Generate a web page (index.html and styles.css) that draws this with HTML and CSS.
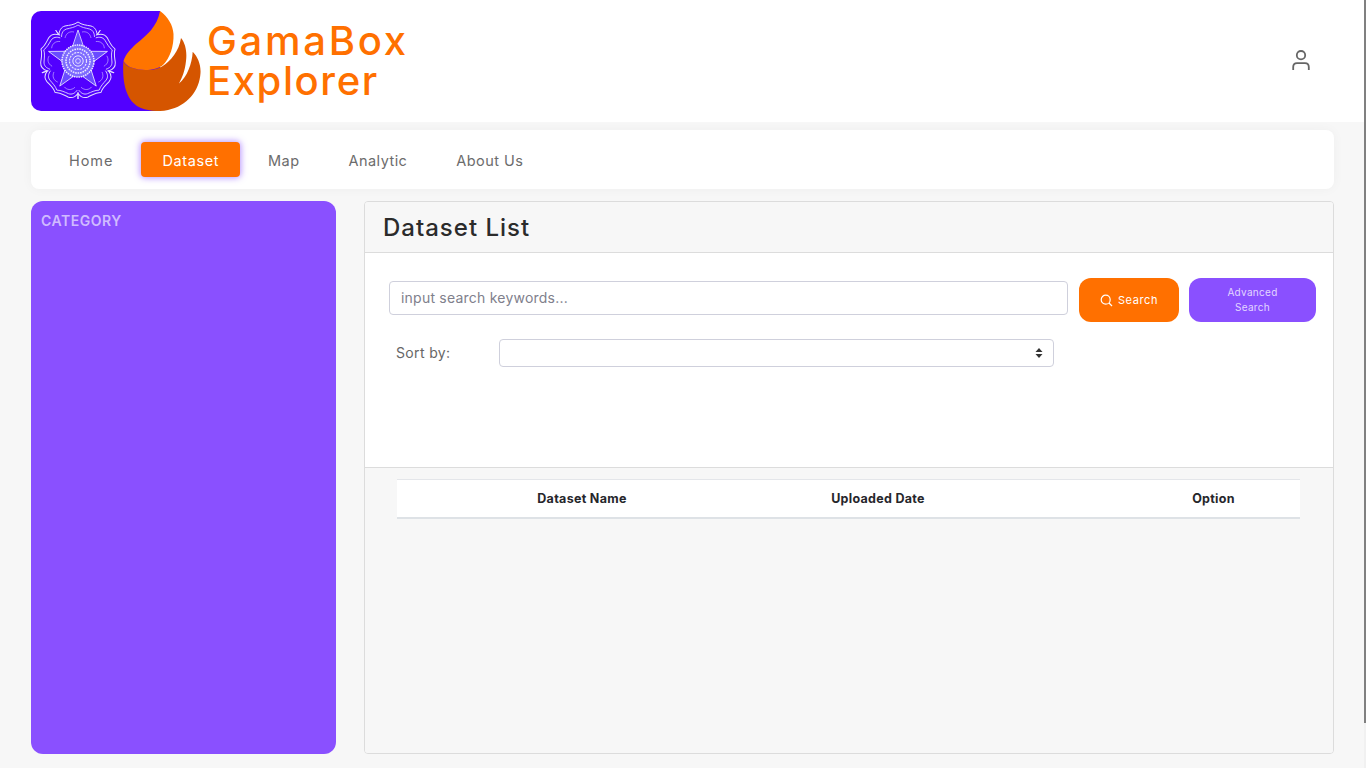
FILE: index.html
```html
<!DOCTYPE html>
<html lang="en">
<head>
<meta charset="utf-8">
<title>GamaBox Explorer</title>
<link rel="stylesheet" href="styles.css">
</head>
<body>
<div class="scrollbar"><div class="scrollbar-thumb"></div></div>
<header class="topbar">
  <a class="brand">
    <svg class="logo" width="170" height="100" viewBox="0 0 170 100" aria-hidden="true">
      <defs>
        <g id="halfpetal" fill="none" stroke="#e4e0ff">
          <path stroke-width="1" d="M0,-39 C4,-36 8,-36 13,-35 C17,-34 19,-30 19,-26 L22.300,-30.700"/>
          <path stroke-width="0.8" d="M0,-36 C3.500,-33.500 7.500,-33 11.500,-32 C15,-31 16.500,-28 16.500,-24"/>
          <path stroke-width="0.5" d="M4,-29 C8,-30 12,-28 13,-23"/>
        </g>
        <g id="petal">
          <use href="#halfpetal"/>
          <use href="#halfpetal" transform="scale(-1,1)"/>
        </g>
        <path id="tip" d="M0,-31 L6,-13 L-6,-13 Z" fill="#6a4cff" stroke="#e6e2ff" stroke-width="0.8"/>
      </defs>
      <path fill="#5200ff" d="M10,0H129V100H10A10,10 0 0 1 0,90V10A10,10 0 0 1 10,0Z"/>
      <g transform="translate(47,50)">
        <use href="#petal"/>
        <use href="#petal" transform="rotate(72)"/>
        <use href="#petal" transform="rotate(144)"/>
        <use href="#petal" transform="rotate(216)"/>
        <use href="#petal" transform="rotate(288)"/>
        <use href="#tip"/>
        <use href="#tip" transform="rotate(72)"/>
        <use href="#tip" transform="rotate(144)"/>
        <use href="#tip" transform="rotate(216)"/>
        <use href="#tip" transform="rotate(288)"/>
        <circle r="16" fill="#7e6bff" stroke="#f0eeff" stroke-width="1.500" stroke-dasharray="1.500 0.800"/>
        <circle r="12" fill="none" stroke="#f0eeff" stroke-width="1.500" stroke-dasharray="1.600 0.900"/>
        <circle r="8.500" fill="none" stroke="#e8e4ff" stroke-width="1.200" stroke-dasharray="2 1"/>
        <circle r="5.200" fill="none" stroke="#e8e4ff" stroke-width="1"/>
        <circle r="2.400" fill="none" stroke="#f0eeff" stroke-width="0.800"/>
      </g>
      <path fill="#d55500" d="M92.500,50C94,54 98,56 102,57C110,60 124,60 131,55.500C140,50 148,40 150,27C155,33 156,42 155,50C154,60 151,67 148,72.500C156,66 161,53 161.700,40.700C167,46 170,54 169.500,62C168.500,80 156,95 137,99C128,101 118,100 110,97C98,92 91,78 92.300,52Z"/>
      <path fill="#ff7400" d="M129,0C137,6 142,14 142.500,23C143,35 139,47 132,54C125,60 110,60 102,57C98,56 94,53 92.500,50C95,42 100,38 105,33C116,24 126,16 129,0Z"/>
    </svg>
    <span class="brand-name"><span class="brand-line brand-line-one">GamaBox</span><span class="brand-line brand-line-two">Explorer</span></span>
  </a>
  <button class="user-btn" aria-label="User">
    <svg width="20" height="20" viewBox="0 0 20 20" fill="none" stroke="#666" stroke-width="1.800" aria-hidden="true">
      <circle cx="10" cy="5.200" r="4.200"/>
      <path d="M2.200 20V17Q2.200 13.200 6 13.200H14Q17.800 13.200 17.800 17V20"/>
    </svg>
  </button>
</header>

<nav class="navbar">
  <a class="nav-item nav-home">Home</a>
  <a class="nav-item nav-active">Dataset</a>
  <a class="nav-item">Map</a>
  <a class="nav-item">Analytic</a>
  <a class="nav-item">About Us</a>
</nav>

<div class="content">
  <aside class="sidebar">
    <h2 class="sidebar-title">CATEGORY</h2>
  </aside>
  <main class="panel">
    <div class="panel-head"><h1 class="panel-title">Dataset List</h1></div>
    <div class="panel-body">
      <div class="search-row">
        <input class="search-input" type="text" placeholder="input search keywords...">
        <button class="btn btn-orange">
          <svg width="13" height="13" viewBox="0 0 13 13" fill="none" stroke="#fff" stroke-width="1.200" aria-hidden="true"><circle cx="5.700" cy="5.700" r="4.500"/><path d="M9 9L12 12"/></svg>
          Search
        </button>
        <button class="btn btn-purple">Advanced<br>Search</button>
      </div>
      <div class="sort-row">
        <label class="sort-label">Sort by:</label>
        <div class="sort-select">
          <svg width="8" height="12" viewBox="0 0 8 12" fill="#333" aria-hidden="true"><path d="M4 1L7.500 5H.5ZM4 11L.5 7H7.500Z"/></svg>
        </div>
      </div>
    </div>
    <div class="panel-foot">
      <div class="table-head">
        <span>Dataset Name</span>
        <span>Uploaded Date</span>
        <span></span>
        <span>Option</span>
      </div>
    </div>
  </main>
</div>
</body>
</html>
```
FILE: styles.css
```css
* { box-sizing: border-box; }
html, body { height: 100%; }
body {
  margin: 0;
  height: 768px;
  overflow: hidden;
  background: #f7f7f7;
  font-family: Inter, "Open Sans", sans-serif;
  color: #666;
}
.scrollbar {
  position: fixed;
  top: 0;
  right: 0;
  width: 2px;
  height: 768px;
  background: #f1f1f1;
}
.scrollbar-thumb { height: 723px; background: #808080; }

.topbar {
  height: 122px;
  background: #fff;
  padding: 11px 55px 11px 31px;
  display: flex;
  align-items: center;
  justify-content: space-between;
}
.brand { display: flex; align-items: center; }
.logo { display: block; }
.brand-name {
  margin-left: 6px;
  color: #ff7000;
  font-size: 40px;
  line-height: 40px;
  font-weight: 500;
}
.brand-line { display: block; }
.brand-line-one { letter-spacing: 2.700px; }
.brand-line-two { letter-spacing: 1.600px; }
.user-btn {
  border: 0;
  background: none;
  padding: 0;
  width: 20px;
  height: 20px;
  margin-bottom: 2px;
  display: block;
}
.user-btn svg { display: block; }

.navbar {
  margin: 8px 32px 0 31px;
  height: 59px;
  background: #fff;
  border-radius: 8px;
  box-shadow: 0 0 12px rgba(0, 0, 0, 0.04);
  padding: 0 17px;
  display: flex;
  align-items: center;
  gap: 7px;
}
.nav-item {
  height: 35px;
  padding: 1px 21px 0;
  display: flex;
  align-items: center;
  font-size: 14.500px;
  letter-spacing: 0.450px;
  color: #6c6c6c;
  border-radius: 4px;
}
.nav-home { letter-spacing: 0.950px; }
.nav-active {
  background: #ff7000;
  color: #fff;
  letter-spacing: 0.600px;
  box-shadow: 0 0 6px 1px rgba(138, 80, 255, 0.6);
}

.content {
  margin: 12px 32px 0 31px;
  height: 553px;
  display: flex;
  gap: 28px;
}
.sidebar {
  width: 305px;
  background: #8a50ff;
  border-radius: 12px;
  padding: 12px 10px;
}
.sidebar-title {
  margin: 0;
  font-size: 14px;
  line-height: 16px;
  font-weight: 600;
  letter-spacing: 0.500px;
  color: #d0bbff;
}
.panel {
  flex: 1;
  border: 1px solid #dcdcdc;
  border-radius: 4px;
  display: flex;
  flex-direction: column;
  overflow: hidden;
}
.panel-head {
  height: 51px;
  background: #f7f7f7;
  border-bottom: 1px solid #dcdcdc;
  padding: 0 18px;
  display: flex;
  align-items: center;
}
.panel-title {
  margin: 0;
  font-size: 24px;
  font-weight: 500;
  color: #2b2b2b;
  letter-spacing: 1px;
}
.panel-body {
  height: 215px;
  background: #fff;
  border-bottom: 1px solid #dcdcdc;
  padding: 25px 17px 0 24px;
}
.search-row { display: flex; align-items: flex-start; }
.search-input {
  width: 679px;
  height: 34px;
  margin-top: 3px;
  border: 1px solid #cfd0dc;
  border-radius: 4px;
  padding: 0 11px 2px;
  font: 14px Inter, sans-serif;
  letter-spacing: 0.220px;
  outline: none;
}
.search-input::placeholder { color: #80808c; opacity: 1; }
.btn {
  height: 44px;
  border: 0;
  border-radius: 12px;
  color: #fff;
  font: 11px/15px Inter, sans-serif;
  letter-spacing: 0.600px;
  display: flex;
  align-items: center;
  justify-content: center;
  text-align: center;
}
.btn-orange { width: 100px; margin-left: 11px; background: #ff7000; gap: 5px; }
.btn-purple { width: 127px; margin-left: 10px; background: #8a50ff; color: #e2d6ff; font-size: 10px; letter-spacing: 0.300px; }
.sort-row { display: flex; align-items: center; margin-top: 17px; padding-left: 7px; }
.sort-label { width: 103px; font-size: 14px; color: #666; letter-spacing: 0.350px; padding-bottom: 2px; }
.sort-select {
  width: 555px;
  height: 28px;
  background: #fff;
  border: 1px solid #cfd0dc;
  border-radius: 4px;
  padding-right: 10px;
  display: flex;
  align-items: center;
  justify-content: flex-end;
}
.panel-foot {
  flex: 1;
  background: #f7f7f7;
  padding: 11px 32px 0;
}
.table-head {
  width: 903px;
  height: 40px;
  background: #fff;
  border-top: 1px solid #e4e6ea;
  border-bottom: 2px solid #dee2e6;
  display: grid;
  grid-template-columns: 370px 222px 138px 173px;
  align-items: center;
  text-align: center;
  font-size: 12.500px;
  font-weight: 700;
  letter-spacing: 0.300px;
  color: #26262b;
}
```
